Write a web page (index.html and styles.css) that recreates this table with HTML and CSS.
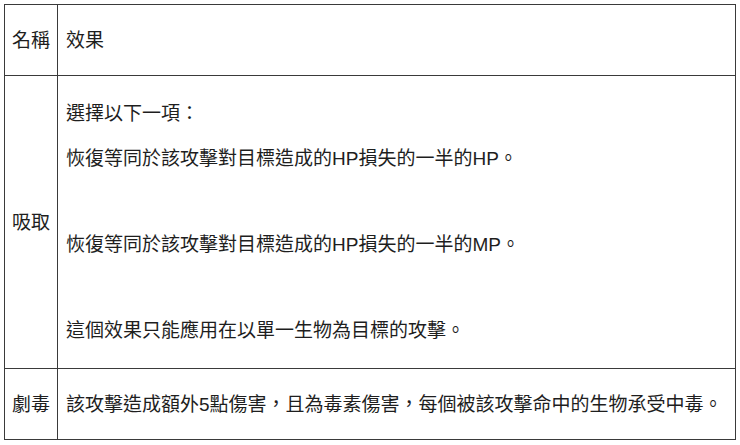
FILE: index.html
```html
<!DOCTYPE html>
<html lang="zh-Hant">
<head>
<meta charset="utf-8">
<link rel="stylesheet" href="styles.css">
</head>
<body>
<table class="effects">
  <tr class="row-short">
    <td class="name">名稱</td>
    <td class="desc">效果</td>
  </tr>
  <tr>
    <td class="name">吸取</td>
    <td class="desc multi">
      <p>選擇以下一項：</p>
      <p>恢復等同於該攻擊對目標造成的HP損失的一半的HP。</p>
      <p class="blank">&nbsp;</p>
      <p>恢復等同於該攻擊對目標造成的HP損失的一半的MP。</p>
      <p class="blank">&nbsp;</p>
      <p>這個效果只能應用在以單一生物為目標的攻擊。</p>
    </td>
  </tr>
  <tr class="row-short">
    <td class="name">劇毒</td>
    <td class="desc">該攻擊造成額外5點傷害，且為毒素傷害，每個被該攻擊命中的生物承受中毒。</td>
  </tr>
</table>
</body>
</html>
```
FILE: styles.css
```css
html, body {
  margin: 0;
  padding: 0;
  background: #ffffff;
}
body {
  padding: 4px 0 0 4px;
  font-family: "Liberation Sans", "Noto Sans CJK TC", sans-serif;
  font-size: 19px;
  color: #1e1e1e;
}
.effects {
  border-collapse: collapse;
  width: 732px;
}
.effects td {
  border: 1px solid #3a3a3a;
  vertical-align: middle;
  line-height: 27px;
  padding: 0 8px;
  white-space: nowrap;
}
.effects .name {
  width: 38px;
  padding: 0 7px;
}
.row-short td {
  height: 70px;
}
.effects .multi {
  padding: 8px 8px 8px;
}
.multi p {
  margin: 16px 0;
}
.multi p:first-child {
  margin-bottom: 18px;
}
```
